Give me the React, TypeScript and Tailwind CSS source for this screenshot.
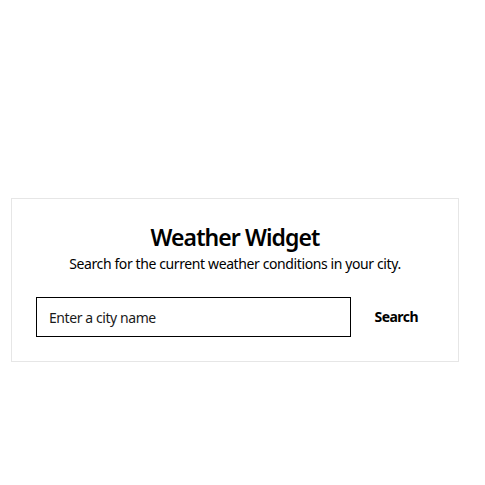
export default function App() {
  return (
    <div className="min-h-screen bg-white pt-[198px] font-['Noto_Sans',sans-serif] text-black">
      <div className="ml-[11px] w-[448px] border border-[#e6e6e6] bg-white p-6">
        <h1 className="text-center text-[23px] font-semibold leading-[28px] tracking-[-0.04em]">
          Weather Widget
        </h1>
        <p className="mt-[3px] text-center text-sm leading-5 tracking-[-0.028em]">
          Search for the current weather conditions in your city.
        </p>
        <div className="mt-[23px] flex items-center">
          <input
            type="text"
            placeholder="Enter a city name"
            className="h-10 flex-1 border border-black px-3 text-sm tracking-[-0.03em] placeholder:text-[#1a1a1a] focus:outline-none"
          />
          <button className="ml-2 px-4 text-sm font-bold tracking-[-0.04em]">Search</button>
        </div>
      </div>
    </div>
  );
}
